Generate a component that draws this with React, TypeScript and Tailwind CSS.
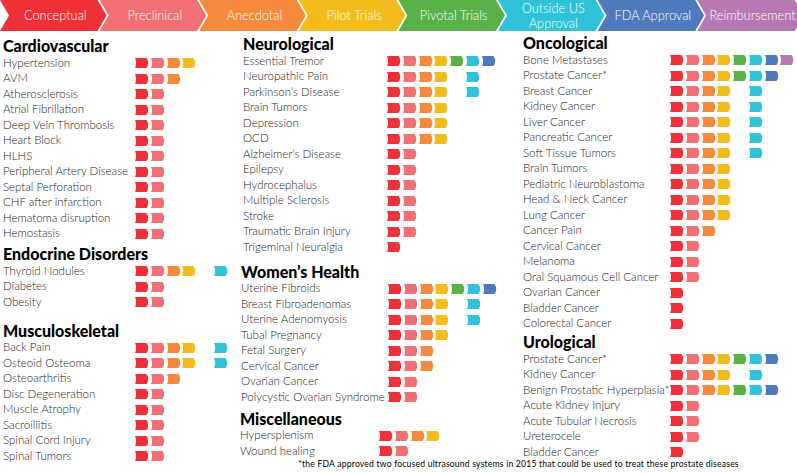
import React from "react";

const SEG_COLORS = [
  "#ee3136",
  "#f26f73",
  "#f68a3c",
  "#f2bd1c",
  "#5ab148",
  "#2fc2d9",
  "#4f7bbd",
  "#b779b4",
];

type Row = [string, number[]];
type Section = { title: string; rows: Row[]; mt: string; pl: string; lw: string };

const R01 = [0, 1];
const R0 = [0];
const R012 = [0, 1, 2];
const R0123 = [0, 1, 2, 3];
const R01235 = [0, 1, 2, 3, 5];
const R06 = [0, 1, 2, 3, 4, 5, 6];
const R07 = [0, 1, 2, 3, 4, 5, 6, 7];

const col1: Section[] = [
  {
    title: "Cardiovascular",
    mt: "mt-0",
    pl: "pl-[3px]",
    lw: "w-[132px]",
    rows: [
      ["Hypertension", R0123],
      ["AVM", R012],
      ["Atherosclerosis", R01],
      ["Atrial Fibrillation", R01],
      ["Deep Vein Thrombosis", R01],
      ["Heart Block", R01],
      ["HLHS", R01],
      ["Peripheral Artery Disease", R01],
      ["Septal Perforation", R01],
      ["CHF after infarction", R01],
      ["Hematoma disruption", R01],
      ["Hemostasis", R01],
    ],
  },
  {
    title: "Endocrine Disorders",
    mt: "mt-[5px]",
    pl: "pl-[3px]",
    lw: "w-[132px]",
    rows: [
      ["Thyroid Nodules", R01235],
      ["Diabetes", R01],
      ["Obesity", R01],
    ],
  },
  {
    title: "Musculoskeletal",
    mt: "mt-[13px]",
    pl: "pl-[3px]",
    lw: "w-[132px]",
    rows: [
      ["Back Pain", R01235],
      ["Osteoid Osteoma", R01235],
      ["Osteoarthritis", R012],
      ["Disc Degeneration", R01],
      ["Muscle Atrophy", R01],
      ["Sacroiliitis", R01],
      ["Spinal Cord Injury", R01],
      ["Spinal Tumors", R01],
    ],
  },
];

const col2: Section[] = [
  {
    title: "Neurological",
    mt: "mt-0",
    pl: "pl-[3px]",
    lw: "w-[144px]",
    rows: [
      ["Essential Tremor", R06],
      ["Neuropathic Pain", R01235],
      ["Parkinson\u2019s Disease", R01235],
      ["Brain Tumors", R0123],
      ["Depression", R0123],
      ["OCD", R0123],
      ["Alzheimer\u2019s Disease", R01],
      ["Epilepsy", R01],
      ["Hydrocephalus", R01],
      ["Multiple Sclerosis", R01],
      ["Stroke", R01],
      ["Traumatic Brain Injury", R01],
      ["Trigeminal Neuralgia", R0],
    ],
  },
  {
    title: "Women\u2019s Health",
    mt: "mt-[9px]",
    pl: "pl-[1px]",
    lw: "w-[147px]",
    rows: [
      ["Uterine Fibroids", R06],
      ["Breast Fibroadenomas", R01235],
      ["Uterine Adenomyosis", R01235],
      ["Tubal Pregnancy", R0123],
      ["Fetal Surgery", R012],
      ["Cervical Cancer", R012],
      ["Ovarian Cancer", R01],
      ["Polycystic Ovarian Syndrome", R01],
    ],
  },
  {
    title: "Miscellaneous",
    mt: "mt-[6px]",
    pl: "pl-0",
    lw: "w-[139px]",
    rows: [
      ["Hypersplenism", R0123],
      ["Wound healing", R01],
    ],
  },
];

const col3: Section[] = [
  {
    title: "Oncological",
    mt: "mt-0",
    pl: "pl-[3px]",
    lw: "w-[147px]",
    rows: [
      ["Bone Metastases", R07],
      ["Prostate Cancer*", R06],
      ["Breast Cancer", R01235],
      ["Kidney Cancer", R01235],
      ["Liver Cancer", R01235],
      ["Pancreatic Cancer", R01235],
      ["Soft Tissue Tumors", R01235],
      ["Brain Tumors", R0123],
      ["Pediatric Neuroblastoma", R0123],
      ["Head & Neck Cancer", R0123],
      ["Lung Cancer", R0123],
      ["Cancer Pain", R012],
      ["Cervical Cancer", R01],
      ["Melanoma", R01],
      ["Oral Squamous Cell Cancer", R01],
      ["Ovarian Cancer", R0],
      ["Bladder Cancer", R0],
      ["Colorectal Cancer", R0],
    ],
  },
  {
    title: "Urological",
    mt: "mt-[3px]",
    pl: "pl-[3px]",
    lw: "w-[147px]",
    rows: [
      ["Prostate Cancer*", R06],
      ["Kidney Cancer", R01235],
      ["Benign Prostatic Hyperplasia*", R06],
      ["Acute Kidney Injury", R01],
      ["Acute Tubular Necrosis", R01],
      ["Ureterocele", R01],
      ["Bladder Cancer", R0],
    ],
  },
];

const stages: { label: React.ReactNode; bg: string }[] = [
  { label: "Conceptual", bg: "bg-[#ee3136]" },
  { label: "Preclinical", bg: "bg-[#f26f73]" },
  { label: "Anecdotal", bg: "bg-[#f68a3c]" },
  { label: "Pilot Trials", bg: "bg-[#f2bd1c]" },
  { label: "Pivotal Trials", bg: "bg-[#5ab148]" },
  {
    label: (
      <>
        Outside US
        <br />
        Approval
      </>
    ),
    bg: "bg-[#2fc2d9]",
  },
  { label: "FDA Approval", bg: "bg-[#4f7bbd]" },
  { label: "Reimbursement", bg: "bg-[#b779b4]" },
];

function Seg({ color }: { color: string }) {
  return (
    <svg width="14.5" height="10" viewBox="0 0 14.5 10" className="block">
      <path d="M0 0 H11.5 Q15 5 11.5 10 H0 Q2.2 5 0 0 Z" fill={color} />
    </svg>
  );
}

function Bars({ stages: s }: { stages: number[] }) {
  return (
    <div className="flex translate-y-[1px]">
      {Array.from({ length: 8 }).map((_, i) => (
        <div key={i} className="w-[15.75px] flex-none">
          {s.includes(i) ? <Seg color={SEG_COLORS[i]} /> : null}
        </div>
      ))}
    </div>
  );
}

function SectionBlock({ s }: { s: Section }) {
  return (
    <div className={`${s.mt} ${s.pl}`}>
      <div className="h-[17px] flex items-center text-[16px] font-black text-black leading-none whitespace-nowrap">
        {s.title}
      </div>
      {s.rows.map(([name, st], i) => (
        <div key={i} className="h-[15.5px] flex items-center">
          <div
            className={`${s.lw} flex-none text-[11.5px] font-light leading-none text-[#1e1a1b] whitespace-nowrap`}
          >
            {name}
          </div>
          <Bars stages={st} />
        </div>
      ))}
    </div>
  );
}

export default function App() {
  return (
    <div
      className="w-[797px] h-[473px] overflow-hidden bg-white relative"
      style={{ fontFamily: "Lato, 'Open Sans', sans-serif" }}
    >
      <div className="flex h-[31px] w-[797px] overflow-hidden">
        {stages.map((st, i) => (
          <div
            key={i}
            className={`${st.bg} flex-none w-[106.6px] -mr-[7px] h-full flex items-center justify-center pl-[10px] pr-[6px] text-white text-[12.8px] font-light leading-[15px] text-center [clip-path:polygon(0_0,calc(100%_-_9px)_0,100%_50%,calc(100%_-_9px)_100%,0_100%,9px_50%)]`}
          >
            <span className="whitespace-nowrap">{st.label}</span>
          </div>
        ))}
      </div>
      <div className="flex">
        <div className="w-[240px] flex-none pt-[6.5px]">
          {col1.map((s, i) => (
            <SectionBlock key={i} s={s} />
          ))}
        </div>
        <div className="flex-1 flex flex-col">
          <div className="flex">
            <div className="w-[280px] flex-none pt-[4.5px]">
              {col2.map((s, i) => (
                <SectionBlock key={i} s={s} />
              ))}
            </div>
            <div className="flex-1 pt-[3.5px]">
              {col3.map((s, i) => (
                <SectionBlock key={i} s={s} />
              ))}
            </div>
          </div>
          <div className="text-center text-[8.6px] leading-[10px] text-black tracking-[0.2px] whitespace-nowrap">
            *the FDA approved two focused ultrasound systems in 2015 that could be used to treat these prostate diseases
          </div>
        </div>
      </div>
    </div>
  );
}
